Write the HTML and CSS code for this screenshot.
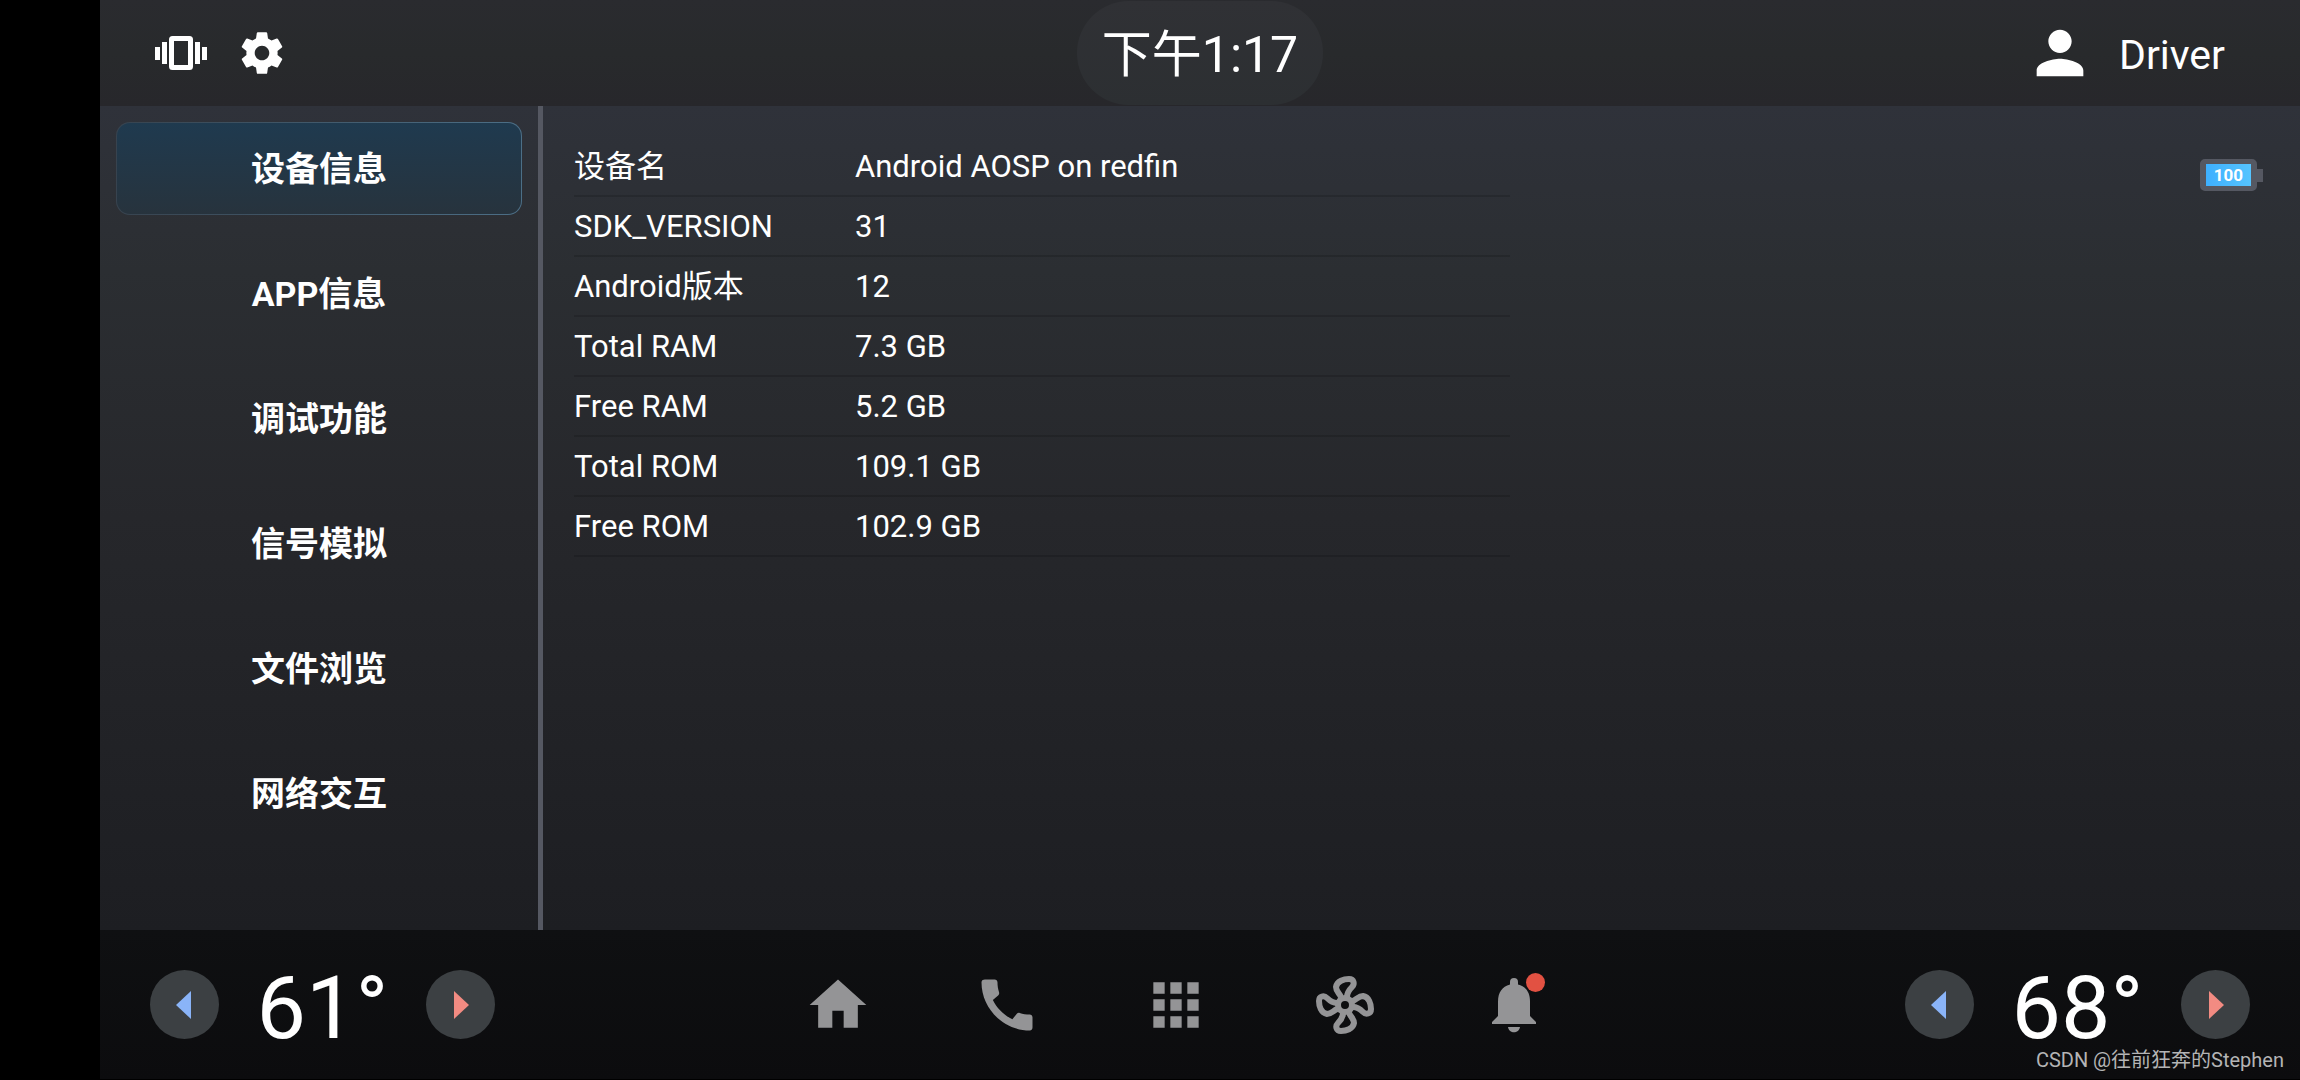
FILE: index.html
```html
<!DOCTYPE html>
<html lang="zh-CN">
<head>
<meta charset="utf-8">
<meta name="viewport" content="width=device-width, initial-scale=1">
<title>设备信息</title>
<link rel="stylesheet" href="styles.css">
</head>
<body>
<div class="screen">
  <header class="status-bar">
    <div class="quick">
      <button class="icon-button" aria-label="振动">
        <svg class="icon-vibrate" viewBox="0 0 52 34" aria-hidden="true">
          <path d="M0 11h5v13H0zM7 6h5v22H7zM40 6h5v22h-5zM47 11h5v13h-5z"/>
          <path fill-rule="evenodd" d="M17.500 0h17a3.500 3.500 0 0 1 3.500 3.500v27a3.500 3.500 0 0 1-3.500 3.500h-17a3.500 3.500 0 0 1-3.500-3.500v-27A3.500 3.500 0 0 1 17.500 0zM19 5v24h14V5z"/>
        </svg>
      </button>
      <button class="icon-button" aria-label="设置">
        <svg class="icon-gear" viewBox="0 0 24 24" aria-hidden="true"><path d="M19.43 12.98c.04-.32.07-.64.07-.98s-.03-.66-.07-.98l2.11-1.65c.19-.15.24-.42.12-.64l-2-3.46c-.12-.22-.39-.3-.61-.22l-2.49 1c-.52-.4-1.080-.73-1.690-.98l-.38-2.650C14.460 2.180 14.250 2 14 2h-4c-.25 0-.46.18-.49.42l-.38 2.650c-.61.25-1.170.59-1.690.98l-2.490-1c-.23-.09-.49 0-.61.22l-2 3.460c-.13.22-.07.49.12.64l2.110 1.650c-.04.32-.07.65-.07.98s.03.66.07.98l-2.110 1.650c-.19.15-.24.42-.12.64l2 3.460c.12.22.39.3.61.22l2.490-1c.52.4 1.080.73 1.690.98l.38 2.650c.03.24.24.42.49.42h4c.25 0 .46-.18.49-.42l.38-2.650c.61-.25 1.170-.59 1.690-.98l2.490 1c.23.09.49 0 .61-.22l2-3.460c.12-.22.07-.49-.12-.64l-2.110-1.650zM12 15.500c-1.930 0-3.500-1.570-3.500-3.500s1.570-3.500 3.500-3.500 3.500 1.570 3.500 3.500-1.570 3.500-3.500 3.500z"/></svg>
      </button>
    </div>
    <time class="clock" datetime="13:17">下午1:17</time>
    <button class="profile">
      <svg class="icon-person" viewBox="0 0 24 24" aria-hidden="true"><path d="M12 12c2.210 0 4-1.790 4-4s-1.790-4-4-4-4 1.790-4 4 1.790 4 4 4zm0 2c-2.670 0-8 1.340-8 4v2h16v-2c0-2.660-5.330-4-8-4z"/></svg>
      <span class="profile-name">Driver</span>
    </button>
  </header>

  <div class="workspace">
    <nav class="sidebar" aria-label="功能">
      <button class="tab tab-active" aria-current="page">设备信息</button>
      <button class="tab">APP信息</button>
      <button class="tab">调试功能</button>
      <button class="tab">信号模拟</button>
      <button class="tab">文件浏览</button>
      <button class="tab">网络交互</button>
    </nav>
    <main class="content">
      <table class="info">
        <tbody>
          <tr><th scope="row">设备名</th><td>Android AOSP on redfin</td></tr>
          <tr><th scope="row">SDK_VERSION</th><td>31</td></tr>
          <tr><th scope="row">Android版本</th><td>12</td></tr>
          <tr><th scope="row">Total RAM</th><td>7.3 GB</td></tr>
          <tr><th scope="row">Free RAM</th><td>5.2 GB</td></tr>
          <tr><th scope="row">Total ROM</th><td>109.1 GB</td></tr>
          <tr><th scope="row">Free ROM</th><td>102.9 GB</td></tr>
        </tbody>
      </table>
      <div class="battery"><span class="battery-level">100</span></div>
    </main>
  </div>

  <footer class="dock">
    <div class="climate">
      <button class="step" aria-label="降低温度"><svg class="arrow arrow-cool" viewBox="0 0 18 28" aria-hidden="true"><path d="M15 0v28L0 14z"/></svg></button>
      <output class="degrees">61°</output>
      <button class="step" aria-label="升高温度"><svg class="arrow arrow-warm" viewBox="0 0 18 28" aria-hidden="true"><path d="M3 0v28l15-14z"/></svg></button>
    </div>
    <nav class="apps" aria-label="应用">
      <button class="app" aria-label="主页"><svg viewBox="0 0 24 24" aria-hidden="true"><path d="M10 20v-6h4v6h5v-8h3L12 3 2 12h3v8z"/></svg></button>
      <button class="app" aria-label="电话"><svg viewBox="0 0 24 24" aria-hidden="true"><path d="M20.010 15.380c-1.230 0-2.420-.2-3.530-.56-.35-.12-.74-.03-1.010.24l-1.570 1.970c-2.830-1.350-5.480-3.900-6.890-6.830l1.950-1.660c.27-.28.35-.67.24-1.020-.37-1.110-.56-2.300-.56-3.530 0-.54-.45-.99-.99-.99H4.190C3.650 3 3 3.240 3 3.990 3 13.280 10.730 21 20.010 21c.71 0 .99-.63.99-1.180v-3.450c0-.54-.45-.99-.99-.99z"/></svg></button>
      <button class="app" aria-label="全部应用"><svg viewBox="0 0 24 24" aria-hidden="true"><path d="M4 8h4V4H4v4zm6 12h4v-4h-4v4zm-6 0h4v-4H4v4zm0-6h4v-4H4v4zm6 0h4v-4h-4v4zm6-10v4h4V4h-4zm-6 4h4V4h-4v4zm6 6h4v-4h-4v4zm0 6h4v-4h-4v4z"/></svg></button>
      <button class="app" aria-label="空调">
        <svg class="fan" viewBox="-34 -34 68 68" aria-hidden="true">
          <circle r="7"/>
          <path id="blade" d="M-4-8C-6-12-9-14-9-18C-8-24-1-26 4-26C9-26 10-21 7-18C4-15 2-12 2-8"/>
          <use href="#blade" transform="rotate(90)"/>
          <use href="#blade" transform="rotate(180)"/>
          <use href="#blade" transform="rotate(270)"/>
        </svg>
      </button>
      <button class="app" aria-label="通知">
        <svg viewBox="0 0 68 68" aria-hidden="true"><path d="M30 11a4 4 0 0 1 8 0v2.500c8 2 12 8 12 17V45l6 6v2H12v-2l6-6V30.500c0-9 4-15 12-17zM28 56h12c-1 7-11 7-12 0z"/></svg>
        <span class="badge"></span>
      </button>
    </nav>
    <div class="climate">
      <button class="step" aria-label="降低温度"><svg class="arrow arrow-cool" viewBox="0 0 18 28" aria-hidden="true"><path d="M15 0v28L0 14z"/></svg></button>
      <output class="degrees">68°</output>
      <button class="step" aria-label="升高温度"><svg class="arrow arrow-warm" viewBox="0 0 18 28" aria-hidden="true"><path d="M3 0v28l15-14z"/></svg></button>
    </div>
    <p class="credit">CSDN @往前狂奔的Stephen</p>
  </footer>
</div>
</body>
</html>
```
FILE: styles.css
```css
* { box-sizing: border-box; }

body {
  margin: 0;
  background: #000;
  color: #fff;
  font-family: Roboto, "Noto Sans CJK SC", sans-serif;
}

button {
  margin: 0;
  padding: 0;
  border: 0;
  background: none;
  color: inherit;
  font: inherit;
}

svg { display: block; fill: currentColor; }

.screen {
  display: grid;
  grid-template-rows: auto 1fr auto;
  min-height: 100vh;
  padding-left: 100px;
}

/* Status bar */
.status-bar {
  display: grid;
  grid-template-columns: 1fr auto 1fr;
  align-items: center;
  height: 106px;
  padding: 0 55px;
  background: linear-gradient(#2a2b2f, #282a2c 50%, #27272b);
}

.quick { display: flex; align-items: center; gap: 30px; }
.icon-vibrate { width: 52px; height: 34px; }
.icon-gear { width: 50px; height: 50px; }

.clock {
  height: 104px;
  padding: 4px 25px 0;
  border-radius: 52px;
  background: linear-gradient(#303135, #2c2f32);
  font-size: 50px;
  line-height: 100px;
}

.profile {
  display: flex;
  align-items: center;
  justify-self: end;
  gap: 24px;
  padding-right: 20px;
  font-size: 41px;
}
.profile-name { padding-top: 4px; }
.icon-person { width: 70px; height: 70px; }

/* Workspace */
.workspace {
  display: grid;
  grid-template-columns: 443px 1fr;
  background: linear-gradient(#2f323a, #2b2e32 20%, #26272b 50%, #1d1e22);
}

.sidebar {
  display: flex;
  flex-direction: column;
  gap: 32px;
  padding: 16px;
  border-right: 5px solid #555862;
}

.tab {
  height: 93px;
  padding-bottom: 5px;
  border-radius: 14px;
  font-size: 34px;
  font-weight: 700;
}

.tab-active {
  border: 1px solid transparent;
  background:
    linear-gradient(#1f3a4f, #27333d) padding-box,
    linear-gradient(90deg, #37434f, #4c6f87) border-box;
}

.content {
  display: flex;
  align-items: flex-start;
  justify-content: space-between;
  padding: 31px 37px 31px 31px;
}

.info {
  width: 936px;
  border-collapse: collapse;
  font-size: 31px;
  line-height: 56px;
}
.info tr { border-bottom: 2px solid rgba(0, 0, 0, 0.14); }
.info th { width: 281px; padding: 2px 0 0; font-weight: 400; text-align: left; }
.info td { padding: 2px 0 0; }

.battery { display: flex; align-items: center; margin-top: 22px; }
.battery::after { content: ""; width: 6px; height: 13px; background: #555862; }
.battery-level {
  width: 57px;
  height: 32px;
  border: 5px solid #555862;
  border-width: 5px 6px;
  border-radius: 5px;
  background: linear-gradient(90deg, #3eb0ff, #56c4ff);
  font-size: 17px;
  font-weight: 700;
  line-height: 22px;
  text-align: center;
}

/* Dock */
.dock {
  position: relative;
  display: flex;
  align-items: center;
  justify-content: space-between;
  height: 150px;
  padding: 0 50px;
  border-bottom: 1px solid #000;
  background: linear-gradient(#0f1012, #0c0c0e);
}

.climate { display: flex; align-items: center; justify-content: space-between; width: 345px; }
.step {
  display: grid;
  place-items: center;
  width: 69px;
  height: 69px;
  border-radius: 50%;
  background: #3c4043;
}
.arrow { width: 18px; height: 28px; }
.arrow-cool { color: #8ab4f8; }
.arrow-warm { color: #f28b82; }
.degrees { padding-top: 6px; font-size: 88px; line-height: 88px; }

.apps { display: flex; gap: 101px; margin-right: 49px; }
.app { position: relative; width: 68px; height: 68px; color: #949496; }
.fan { fill: none; stroke: currentColor; stroke-width: 6; }
.badge {
  position: absolute;
  top: 2px;
  right: 3px;
  width: 19px;
  height: 19px;
  border-radius: 50%;
  background: #e25142;
}

.credit {
  position: absolute;
  right: 16px;
  bottom: 6px;
  margin: 0;
  color: #b4b4b5;
  font-size: 20px;
  line-height: 26px;
}
```
